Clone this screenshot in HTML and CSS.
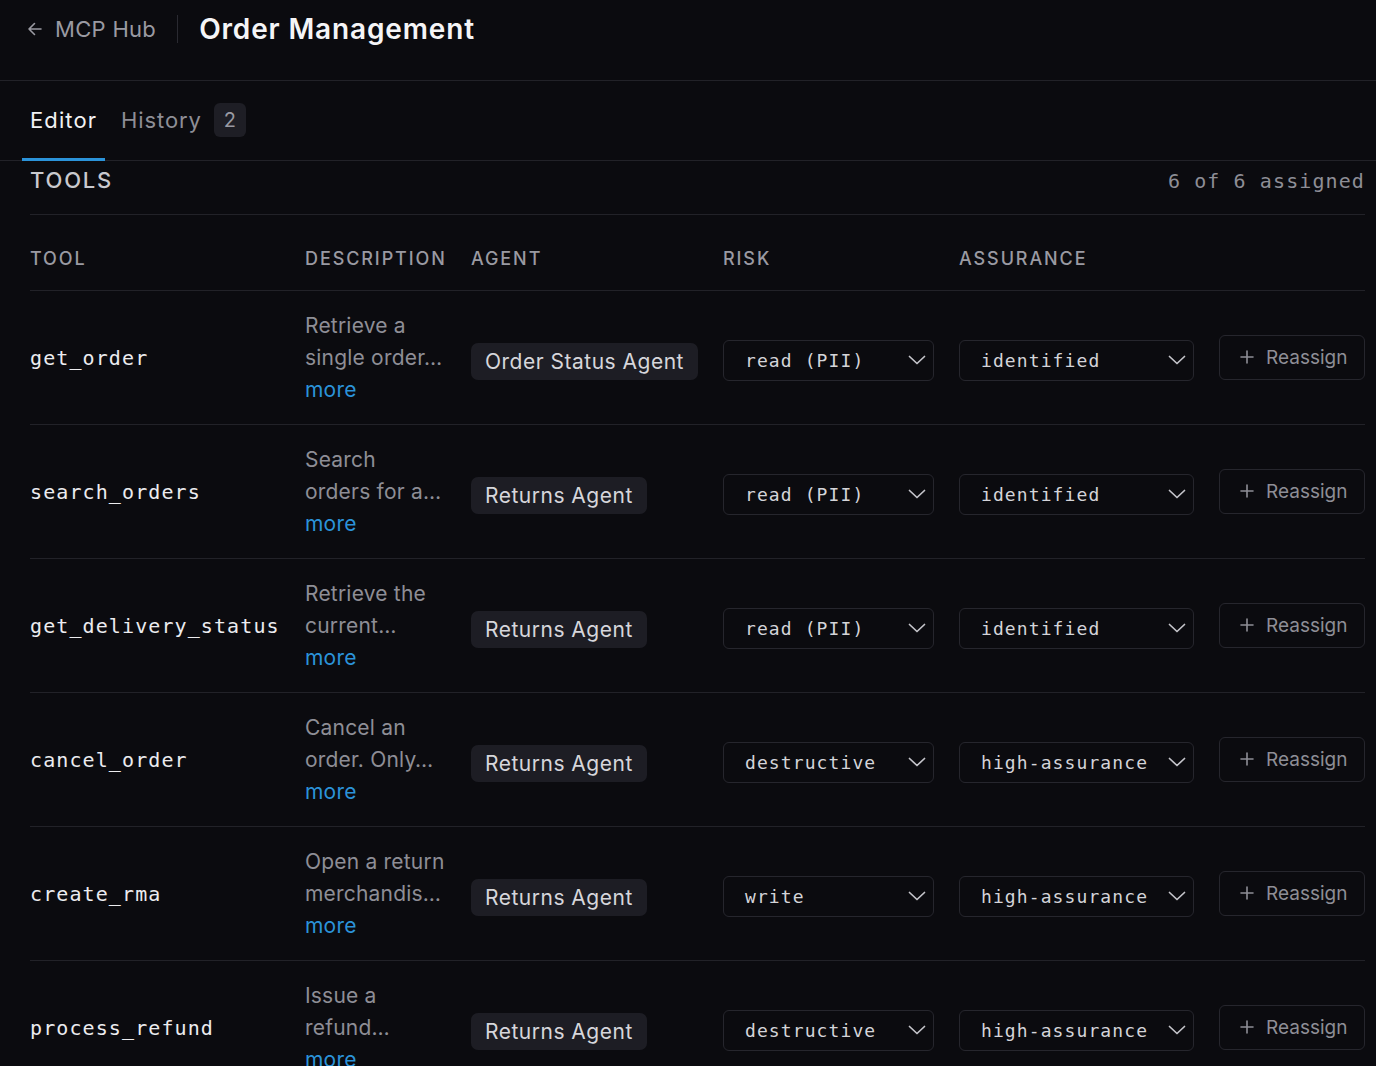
FILE: index.html
```html
<!DOCTYPE html>
<html lang="en">
<head>
<meta charset="utf-8">
<title>Order Management</title>
<link rel="stylesheet" href="styles.css">
</head>
<body>
<header class="topbar">
  <a class="back" href="#">
    <svg class="back-icon" width="18" height="18" viewBox="0 0 18 18" fill="none" stroke="currentColor" stroke-width="1.6" stroke-linecap="round" stroke-linejoin="round"><path d="M15 9H3M8.5 3.5L3 9l5.5 5.5"/></svg>
    <span>MCP Hub</span>
  </a>
  <span class="divider"></span>
  <h1 class="title">Order Management</h1>
</header>

<nav class="tabs">
  <a class="tab active" href="#">Editor</a>
  <a class="tab" href="#">History <span class="badge">2</span></a>
</nav>

<main class="content">
  <div class="section-head">
    <h2 class="section-title">TOOLS</h2>
    <span class="count">6 of 6 assigned</span>
  </div>

  <div class="table">
    <div class="row head">
      <div class="th">TOOL</div>
      <div class="th">DESCRIPTION</div>
      <div class="th">AGENT</div>
      <div class="th">RISK</div>
      <div class="th">ASSURANCE</div>
      <div class="th"></div>
    </div>

    <div class="row">
      <div class="tool">get_order</div>
      <div class="desc"><span class="desc-line">Retrieve a</span><span class="desc-line">single order…</span><a class="more" href="#">more</a></div>
      <div class="agent-cell"><span class="agent">Order Status Agent</span></div>
      <div class="cell"><div class="select risk"><span>read (PII)</span><svg class="chev" width="18" height="10" viewBox="0 0 18 10" fill="none" stroke="currentColor" stroke-width="1.7" stroke-linecap="round" stroke-linejoin="round"><path d="M1.5 1.5L9 8.5l7.5-7"/></svg></div></div>
      <div class="cell"><div class="select assurance"><span>identified</span><svg class="chev" width="18" height="10" viewBox="0 0 18 10" fill="none" stroke="currentColor" stroke-width="1.7" stroke-linecap="round" stroke-linejoin="round"><path d="M1.5 1.5L9 8.5l7.5-7"/></svg></div></div>
      <div class="cell"><button class="reassign"><svg width="14" height="14" viewBox="0 0 14 14" fill="none" stroke="currentColor" stroke-width="1.6" stroke-linecap="round"><path d="M7 1v12M1 7h12"/></svg><span>Reassign</span></button></div>
    </div>

    <div class="row">
      <div class="tool">search_orders</div>
      <div class="desc"><span class="desc-line">Search</span><span class="desc-line">orders for a…</span><a class="more" href="#">more</a></div>
      <div class="agent-cell"><span class="agent">Returns Agent</span></div>
      <div class="cell"><div class="select risk"><span>read (PII)</span><svg class="chev" width="18" height="10" viewBox="0 0 18 10" fill="none" stroke="currentColor" stroke-width="1.7" stroke-linecap="round" stroke-linejoin="round"><path d="M1.5 1.5L9 8.5l7.5-7"/></svg></div></div>
      <div class="cell"><div class="select assurance"><span>identified</span><svg class="chev" width="18" height="10" viewBox="0 0 18 10" fill="none" stroke="currentColor" stroke-width="1.7" stroke-linecap="round" stroke-linejoin="round"><path d="M1.5 1.5L9 8.5l7.5-7"/></svg></div></div>
      <div class="cell"><button class="reassign"><svg width="14" height="14" viewBox="0 0 14 14" fill="none" stroke="currentColor" stroke-width="1.6" stroke-linecap="round"><path d="M7 1v12M1 7h12"/></svg><span>Reassign</span></button></div>
    </div>

    <div class="row">
      <div class="tool">get_delivery_status</div>
      <div class="desc"><span class="desc-line">Retrieve the</span><span class="desc-line">current…</span><a class="more" href="#">more</a></div>
      <div class="agent-cell"><span class="agent">Returns Agent</span></div>
      <div class="cell"><div class="select risk"><span>read (PII)</span><svg class="chev" width="18" height="10" viewBox="0 0 18 10" fill="none" stroke="currentColor" stroke-width="1.7" stroke-linecap="round" stroke-linejoin="round"><path d="M1.5 1.5L9 8.5l7.5-7"/></svg></div></div>
      <div class="cell"><div class="select assurance"><span>identified</span><svg class="chev" width="18" height="10" viewBox="0 0 18 10" fill="none" stroke="currentColor" stroke-width="1.7" stroke-linecap="round" stroke-linejoin="round"><path d="M1.5 1.5L9 8.5l7.5-7"/></svg></div></div>
      <div class="cell"><button class="reassign"><svg width="14" height="14" viewBox="0 0 14 14" fill="none" stroke="currentColor" stroke-width="1.6" stroke-linecap="round"><path d="M7 1v12M1 7h12"/></svg><span>Reassign</span></button></div>
    </div>

    <div class="row">
      <div class="tool">cancel_order</div>
      <div class="desc"><span class="desc-line">Cancel an</span><span class="desc-line">order. Only…</span><a class="more" href="#">more</a></div>
      <div class="agent-cell"><span class="agent">Returns Agent</span></div>
      <div class="cell"><div class="select risk"><span>destructive</span><svg class="chev" width="18" height="10" viewBox="0 0 18 10" fill="none" stroke="currentColor" stroke-width="1.7" stroke-linecap="round" stroke-linejoin="round"><path d="M1.5 1.5L9 8.5l7.5-7"/></svg></div></div>
      <div class="cell"><div class="select assurance"><span>high-assurance</span><svg class="chev" width="18" height="10" viewBox="0 0 18 10" fill="none" stroke="currentColor" stroke-width="1.7" stroke-linecap="round" stroke-linejoin="round"><path d="M1.5 1.5L9 8.5l7.5-7"/></svg></div></div>
      <div class="cell"><button class="reassign"><svg width="14" height="14" viewBox="0 0 14 14" fill="none" stroke="currentColor" stroke-width="1.6" stroke-linecap="round"><path d="M7 1v12M1 7h12"/></svg><span>Reassign</span></button></div>
    </div>

    <div class="row">
      <div class="tool">create_rma</div>
      <div class="desc"><span class="desc-line">Open a return</span><span class="desc-line">merchandis…</span><a class="more" href="#">more</a></div>
      <div class="agent-cell"><span class="agent">Returns Agent</span></div>
      <div class="cell"><div class="select risk"><span>write</span><svg class="chev" width="18" height="10" viewBox="0 0 18 10" fill="none" stroke="currentColor" stroke-width="1.7" stroke-linecap="round" stroke-linejoin="round"><path d="M1.5 1.5L9 8.5l7.5-7"/></svg></div></div>
      <div class="cell"><div class="select assurance"><span>high-assurance</span><svg class="chev" width="18" height="10" viewBox="0 0 18 10" fill="none" stroke="currentColor" stroke-width="1.7" stroke-linecap="round" stroke-linejoin="round"><path d="M1.5 1.5L9 8.5l7.5-7"/></svg></div></div>
      <div class="cell"><button class="reassign"><svg width="14" height="14" viewBox="0 0 14 14" fill="none" stroke="currentColor" stroke-width="1.6" stroke-linecap="round"><path d="M7 1v12M1 7h12"/></svg><span>Reassign</span></button></div>
    </div>

    <div class="row">
      <div class="tool">process_refund</div>
      <div class="desc"><span class="desc-line">Issue a</span><span class="desc-line">refund…</span><a class="more" href="#">more</a></div>
      <div class="agent-cell"><span class="agent">Returns Agent</span></div>
      <div class="cell"><div class="select risk"><span>destructive</span><svg class="chev" width="18" height="10" viewBox="0 0 18 10" fill="none" stroke="currentColor" stroke-width="1.7" stroke-linecap="round" stroke-linejoin="round"><path d="M1.5 1.5L9 8.5l7.5-7"/></svg></div></div>
      <div class="cell"><div class="select assurance"><span>high-assurance</span><svg class="chev" width="18" height="10" viewBox="0 0 18 10" fill="none" stroke="currentColor" stroke-width="1.7" stroke-linecap="round" stroke-linejoin="round"><path d="M1.5 1.5L9 8.5l7.5-7"/></svg></div></div>
      <div class="cell"><button class="reassign"><svg width="14" height="14" viewBox="0 0 14 14" fill="none" stroke="currentColor" stroke-width="1.6" stroke-linecap="round"><path d="M7 1v12M1 7h12"/></svg><span>Reassign</span></button></div>
    </div>
  </div>
</main>
</body>
</html>
```

FILE: styles.css
```css
* { box-sizing: border-box; }

html, body {
  margin: 0;
  padding: 0;
  background: #0b0b0f;
  color: #e8e8ec;
  font-family: Inter, "Noto Sans", "Liberation Sans", sans-serif;
  overflow: hidden;
}

a { text-decoration: none; color: inherit; }

.topbar {
  height: 81px;
  display: flex;
  align-items: flex-start;
  padding: 11px 24px 0 24px;
  border-bottom: 1px solid #222228;
}

.back {
  display: flex;
  align-items: center;
  gap: 11px;
  height: 36px;
  color: #9a9aa2;
  font-size: 22px;
  letter-spacing: 0.3px;
}

.back-icon { margin-left: 2px; }

.divider {
  width: 1px;
  height: 28px;
  margin: 4px 21px 0 21px;
  background: #2a2a31;
}

.title {
  margin: 0;
  font-size: 28px;
  line-height: 36px;
  font-weight: 600;
  color: #f5f5f7;
  letter-spacing: 0.85px;
}

.tabs {
  height: 80px;
  display: flex;
  align-items: stretch;
  padding-left: 22px;
  border-bottom: 1px solid #222228;
}

.tab {
  display: flex;
  align-items: center;
  gap: 12px;
  padding: 0 8px;
  margin-bottom: -1px;
  font-size: 22px;
  letter-spacing: 0.9px;
  color: #8e8e96;
  border-bottom: 3px solid transparent;
}

.tab.active {
  color: #f2f2f4;
  border-bottom-color: #2b93d9;
  letter-spacing: 1.1px;
  margin-right: 8px;
}

.badge {
  display: inline-flex;
  align-items: center;
  justify-content: center;
  width: 32px;
  height: 34px;
  border-radius: 6px;
  background: #1e1e25;
  color: #9a9aa2;
  font-size: 20px;
  letter-spacing: 0;
}

.content {
  padding: 0 11px 0 30px;
}

.section-head {
  height: 54px;
  display: flex;
  justify-content: space-between;
  align-items: flex-start;
  padding-top: 5px;
  border-bottom: 1px solid #222228;
}

.section-title {
  margin: 0;
  font-size: 22px;
  line-height: 28px;
  font-weight: 500;
  letter-spacing: 1.8px;
  color: #c9c9ce;
}

.count {
  font-family: "DejaVu Sans Mono", "Liberation Mono", monospace;
  font-size: 20px;
  line-height: 30px;
  letter-spacing: 1.1px;
  color: #8e8e96;
}

.row {
  display: grid;
  grid-template-columns: 275px 166px 252px 236px 260px 146px;
  align-items: center;
  height: 134px;
  border-bottom: 1px solid #222228;
}

.row.head {
  height: 76px;
  padding-top: 12px;
}

.th {
  font-size: 18px;
  font-weight: 500;
  letter-spacing: 1.9px;
  color: #9a9aa2;
}

.tool {
  font-family: "DejaVu Sans Mono", "Liberation Mono", monospace;
  font-size: 20px;
  letter-spacing: 1.1px;
  color: #ececef;
}

.desc {
  display: flex;
  flex-direction: column;
  font-size: 21px;
  line-height: 32px;
  letter-spacing: 0.2px;
  color: #8e8e96;
  white-space: nowrap;
}

.more {
  color: #2b93d9;
}

.agent-cell { display: flex; }

.agent {
  display: inline-flex;
  align-items: center;
  height: 37px;
  margin-top: 7px;
  padding: 0 14px;
  border-radius: 7px;
  background: #1d1d24;
  color: #d6d6db;
  font-size: 21px;
  letter-spacing: 0.5px;
}

.select {
  display: flex;
  align-items: center;
  justify-content: space-between;
  height: 41px;
  margin-top: 5px;
  padding: 0 7px 0 21px;
  border: 1px solid #26262d;
  border-radius: 6px;
  font-family: "DejaVu Sans Mono", "Liberation Mono", monospace;
  font-size: 18px;
  letter-spacing: 1.1px;
  color: #d4d4d9;
}

.select.risk { width: 211px; }
.select.assurance { width: 235px; }

.chev { color: #c4c4ca; }

.reassign {
  display: flex;
  align-items: center;
  gap: 12px;
  width: 146px;
  height: 45px;
  margin-bottom: 1px;
  padding: 0 0 0 20px;
  border: 1px solid #26262d;
  border-radius: 6px;
  background: transparent;
  color: #8e8e96;
  font-family: Inter, "Noto Sans", sans-serif;
  font-size: 19px;
  cursor: pointer;
}
```
